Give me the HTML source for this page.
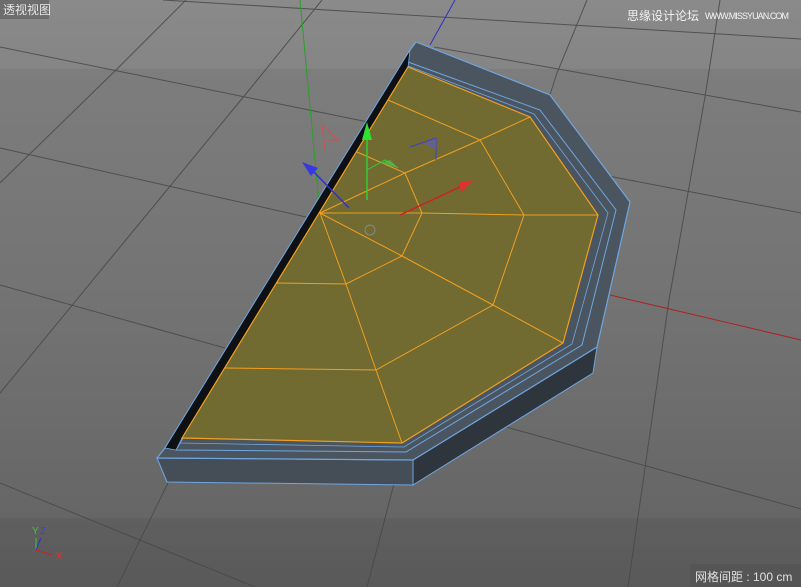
<!DOCTYPE html>
<html><head><meta charset="utf-8"><style>
html,body{margin:0;padding:0;width:801px;height:587px;overflow:hidden;background:#707070}
svg{display:block}
.t{font-family:"Liberation Sans","Noto Sans CJK SC",sans-serif}
</style></head><body>
<svg width="801" height="587" viewBox="0 0 801 587" xmlns="http://www.w3.org/2000/svg">
<defs>
<linearGradient id="bg" x1="0" y1="0" x2="0" y2="1">
<stop offset="0" stop-color="#8a8a8a"/><stop offset="0.117" stop-color="#858585"/><stop offset="0.118" stop-color="#7d7d7d"/><stop offset="0.55" stop-color="#727272"/><stop offset="0.88" stop-color="#666"/><stop offset="0.885" stop-color="#5f5f5f"/><stop offset="1" stop-color="#595959"/>
</linearGradient>
</defs>
<rect width="801" height="587" fill="url(#bg)"/>
<g stroke="#484848" stroke-width="1" fill="none" opacity="0.85">
<path d="M0,47 L368,122"/>
<path d="M434,47 L801,112"/>
<path d="M163,0 L801,39"/>
<path d="M0,148 L306,217"/>
<path d="M551,165 L801,213"/>
<path d="M0,285 L225,348"/>
<path d="M506,427 L801,509"/>
<path d="M0,483 L255,587"/>
<path d="M186,0 L117,69 L0,183"/>
<path d="M322,0 L245,95 L0,393"/>
<path d="M587,0 L557,73 L545,110"/>
<path d="M395,480 L367,587"/>
<path d="M720,0 L705,97 L669,300 L628,587"/>
<path d="M168,483 L117,587"/>
</g>
<line x1="300" y1="0" x2="320" y2="213" stroke="#2aa02a" stroke-width="1"/>
<line x1="430" y1="45" x2="455" y2="0" stroke="#3030c0" stroke-width="1"/>
<line x1="610" y1="295" x2="801" y2="340" stroke="#b02020" stroke-width="1"/>
<polygon points="157,458 413,460 413,485 167,482" fill="#454d57" stroke="#6fa6e0"/>
<polygon points="413,460 597,347 593,373 413,485" fill="#2f353c" stroke="#6fa6e0"/>
<polygon points="416,42 550,95 630,202 597,347 413,460 157,458 165,448 410,50" fill="#4b5560" stroke="#6fa6e0" stroke-width="1.2"/>
<polygon points="408,62 540,110 616,210 582,345 406,452 176,450 405,58" fill="none" stroke="#6fa6e0" stroke-width="1"/>
<polygon points="408,66 534,114 608,213 572,344 404,447 180,443" fill="none" stroke="#6fa6e0" stroke-width="0.8"/>
<polygon points="410,50 408,67 182,438 176,450 165,448" fill="#0e1013" stroke="#6fa6e0" stroke-width="0.8"/>
<polygon points="408,67 530,117 598,215 563,343 402,443 182,438" fill="#716a31" stroke="#f0a020" stroke-width="1.2"/>
<g stroke="#f0a020" stroke-width="1" fill="none">
<path d="M320,213 L405,173 L480,140 L530,117"/>
<path d="M320,213 L422,213 L524,215 L598,215"/>
<path d="M320,213 L402,256 L493,305 L563,343"/>
<path d="M320,213 L346,284 L376,370 L402,443"/>
<path d="M357,152 L405,173 L422,213 L402,256 L346,284 L277,283"/>
<path d="M388,100 L480,140 L524,215 L493,305 L376,370 L225,368"/>
</g>
<line x1="367" y1="200" x2="367" y2="135" stroke="#30d030" stroke-width="1.5"/>
<polygon points="367,122 362,140 372,140" fill="#30e030"/>
<polyline points="367,170 385,160 398,168" stroke="#30d030" fill="none"/>
<polygon points="380,163 390,160 398,168" fill="#50c050" opacity="0.7"/>
<line x1="349" y1="208" x2="310" y2="168" stroke="#3030d0" stroke-width="1.5"/>
<polygon points="302,162 318,168 311,176" fill="#3838e0"/>
<line x1="400" y1="215" x2="462" y2="186" stroke="#d02020" stroke-width="1.5"/>
<polygon points="473,180 458,183 462,192" fill="#e03030"/>
<path d="M325,150 L322,125 L338,140 L325,140" stroke="#d05050" fill="none"/>
<path d="M410,147 L436,138 L436,160" stroke="#4040d0" fill="none"/>
<polygon points="424,144 436,138 436,150" fill="#6060b0" opacity="0.7"/>
<circle cx="370" cy="230" r="5" fill="none" stroke="#888" stroke-width="1"/>
<line x1="36" y1="550" x2="36" y2="538" stroke="#30d030"/>
<line x1="36" y1="550" x2="41" y2="538" stroke="#3030d0"/>
<line x1="36" y1="550" x2="52" y2="555" stroke="#d02020"/>
<text x="32" y="534" class="t" font-size="10" fill="#30d030">Y</text>
<text x="40" y="534" class="t" font-size="10" fill="#4040e0">Z</text>
<text x="56" y="559" class="t" font-size="10" fill="#e03030">X</text>
<rect x="0" y="0" width="49" height="19" fill="#5a5a5a" opacity="0.6"/>
<text x="3" y="14" class="t" font-size="12" fill="#e6e6e6">透视视图</text>
<text x="627" y="20" class="t" font-size="12" fill="#f4f4f4" textLength="72">思缘设计论坛</text>
<text x="705" y="19" class="t" font-size="9" fill="#f4f4f4" textLength="84">WWW.MISSYUAN.COM</text>
<rect x="690" y="564" width="111" height="23" fill="#555"/>
<text x="695" y="581" class="t" font-size="12" fill="#e0e0e0">网格间距 : 100 cm</text>
</svg>
</body></html>
